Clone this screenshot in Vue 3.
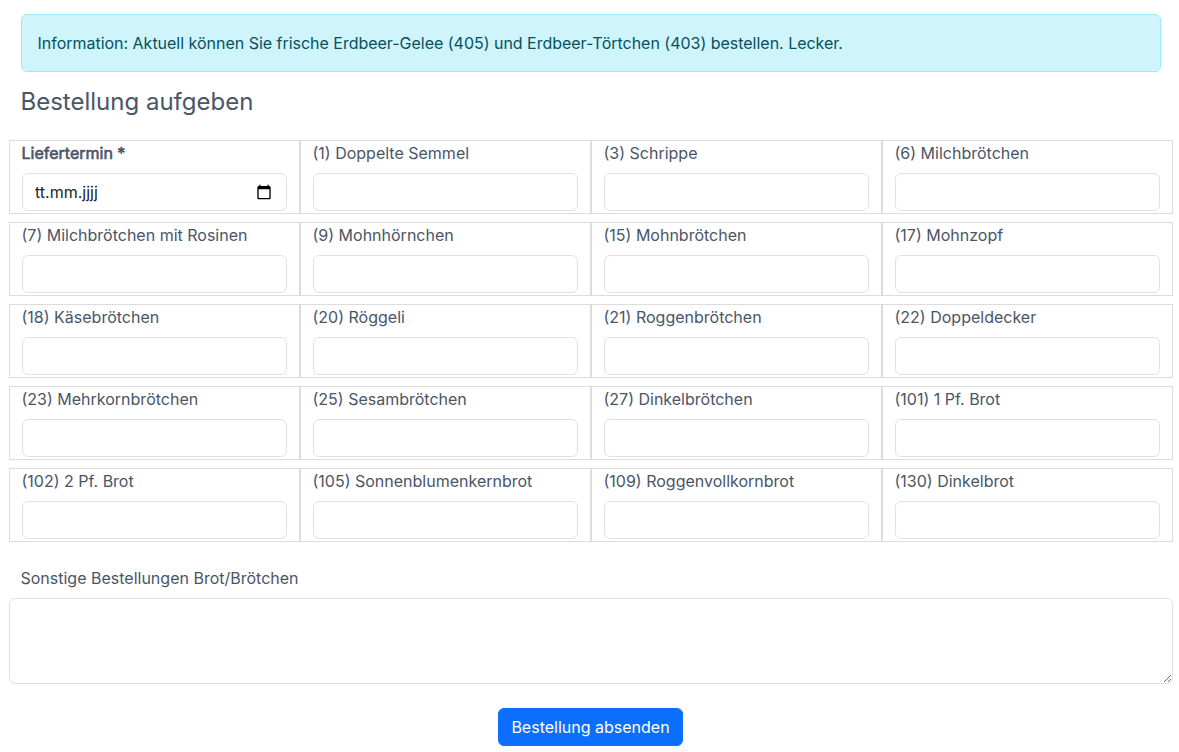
<script setup>
import { ref } from 'vue'

const articles = ref([
  { id: 1, name: 'Doppelte Semmel', amount: '' },
  { id: 3, name: 'Schrippe', amount: '' },
  { id: 6, name: 'Milchbrötchen', amount: '' },
  { id: 7, name: 'Milchbrötchen mit Rosinen', amount: '' },
  { id: 9, name: 'Mohnhörnchen', amount: '' },
  { id: 15, name: 'Mohnbrötchen', amount: '' },
  { id: 17, name: 'Mohnzopf', amount: '' },
  { id: 18, name: 'Käsebrötchen', amount: '' },
  { id: 20, name: 'Röggeli', amount: '' },
  { id: 21, name: 'Roggenbrötchen', amount: '' },
  { id: 22, name: 'Doppeldecker', amount: '' },
  { id: 23, name: 'Mehrkornbrötchen', amount: '' },
  { id: 25, name: 'Sesambrötchen', amount: '' },
  { id: 27, name: 'Dinkelbrötchen', amount: '' },
  { id: 101, name: '1 Pf. Brot', amount: '' },
  { id: 102, name: '2 Pf. Brot', amount: '' },
  { id: 105, name: 'Sonnenblumenkernbrot', amount: '' },
  { id: 109, name: 'Roggenvollkornbrot', amount: '' },
  { id: 130, name: 'Dinkelbrot', amount: '' },
])
const deliveryDate = ref('')
const others = ref('')
</script>

<template>
  <div class="page">
    <div class="alert">Information: Aktuell können Sie frische Erdbeer-Gelee (405) und Erdbeer-Törtchen (403) bestellen. Lecker.</div>
    <h4>Bestellung aufgeben</h4>

    <form @submit.prevent>
      <div class="order-grid">
        <div class="cell">
          <label for="date" class="required">Liefertermin *</label>
          <div class="date-field">
            <input id="date" v-model="deliveryDate" class="form-control" type="text" placeholder="tt.mm.jjjj">
            <svg class="calendar" width="16" height="16" viewBox="0 0 24 24">
              <path d="M20 3h-1V1h-2v2H7V1H5v2H4c-1.1 0-2 .9-2 2v16c0 1.1.9 2 2 2h16c1.1 0 2-.9 2-2V5c0-1.1-.9-2-2-2zm0 18H4V8h16v13z" />
            </svg>
          </div>
        </div>
        <div v-for="article in articles" :key="article.id" class="cell">
          <label :for="'article-' + article.id">({{ article.id }}) {{ article.name }}</label>
          <input :id="'article-' + article.id" v-model="article.amount" class="form-control" type="text">
        </div>
      </div>

      <label for="others" class="others-label">Sonstige Bestellungen Brot/Brötchen</label>
      <textarea id="others" v-model="others" class="form-control"></textarea>
      <div class="actions">
        <button type="submit">Bestellung absenden</button>
      </div>
    </form>
  </div>
</template>

<style>
body {
  overflow: hidden;
  background: #fff;
}
</style>

<style scoped>
.page {
  box-sizing: border-box;
  width: 1179px;
  height: 752px;
  padding: 14px 6px 0 9px;
  font-family: Inter, sans-serif;
  font-size: 16px;
  line-height: 24px;
  color: #4a5568;
}

.alert {
  box-sizing: border-box;
  height: 58px;
  margin: 0 12px;
  padding: 16px 15.5px;
  color: #055160;
  letter-spacing: -0.018px;
  background: #cff4fc;
  border: 1px solid #9eeaf9;
  border-radius: 6px;
}

h4 {
  margin: 15px 12px 24px 11.5px;
  font-size: 24px;
  font-weight: 400;
  line-height: 29px;
}

.order-grid {
  display: grid;
  grid-template-columns: repeat(4, 291px);
  row-gap: 8px;
}

.cell {
  box-sizing: border-box;
  height: 74px;
  padding: 0 12px;
  border: 1px solid #dcdcdc;
}

label {
  display: block;
  margin: 0 0 8px -0.5px;
}

.required {
  -webkit-text-stroke: 0.6px #4a5568;
}

.form-control {
  box-sizing: border-box;
  display: block;
  width: 100%;
  height: 38px;
  padding: 6px 12px;
  font: inherit;
  color: #212529;
  background: #fff;
  border: 1px solid #dee2e6;
  border-radius: 6px;
}

.date-field {
  position: relative;
}

.form-control::placeholder {
  color: #212529;
  opacity: 1;
}

.calendar {
  position: absolute;
  top: 11px;
  right: 15px;
}

.others-label {
  margin: 24px 12px 8px 11.5px;
}

textarea.form-control {
  width: 1164px;
  height: 86px;
  resize: vertical;
}

.actions {
  display: flex;
  justify-content: center;
  margin-top: 24px;
}

button {
  width: 185px;
  height: 38px;
  margin-right: 1px;
  padding: 6px 12px;
  font: inherit;
  color: #fff;
  background: #0d6efd;
  border: 1px solid #0d6efd;
  border-radius: 6px;
}
</style>
